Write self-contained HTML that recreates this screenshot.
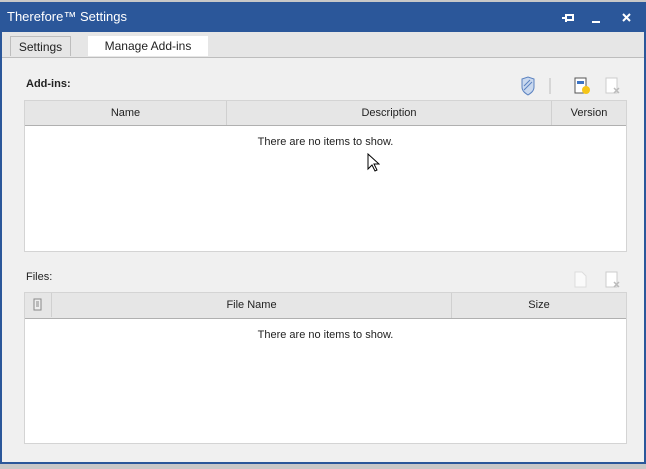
<!DOCTYPE html><html><head><style>
body{margin:0;width:646px;height:469px;background:#c8c8c8;font-family:"Liberation Sans",sans-serif;font-size:11px;color:#222;position:relative;overflow:hidden}
.a{position:absolute}
.win{left:0;top:2px;width:642px;height:460px;border:2px solid #2b579a;border-top:0;background:#f0f0f0}
.title{left:0;top:2px;width:646px;height:30px;background:#2b579a;color:#fff;font-size:13px}
.tbl{background:#fff;border:1px solid #d4d4d4}
.hdr{position:absolute;left:0;top:0;right:0;height:24px;background:#e6e6e6;border-bottom:1px solid #b0b0b0}
.hc{position:absolute;top:0;height:24px;line-height:24px;text-align:center;border-right:1px solid #d0d0d0}
.empty{position:absolute;left:0;right:0;text-align:center}
</style></head><body>
<div class="a win"></div>
<div class="a title"><span class="a" style="left:7px;top:7px">Therefore™ Settings</span>
<svg class="a" style="left:560px;top:9px" width="80" height="14"><g stroke="#fff" stroke-width="2" fill="none"><path d="M2 7h4M6 3v8M6 4h7v5H6"/><path d="M32 11h8"/><path d="M63 3l7 7M70 3l-7 7"/></g></svg></div>
<div class="a" style="left:2px;top:32px;width:642px;height:25px;background:#e6e6e6;border-bottom:1px solid #bdbdbd"></div>
<div class="a" style="left:10px;top:36px;width:59px;height:19px;border:1px solid #bdbdbd;border-bottom:0;background:#e6e6e6;text-align:center;line-height:20px;font-size:12px">Settings</div>
<div class="a" style="left:88px;top:36px;width:120px;height:20px;background:#fff;text-align:center;line-height:20px;font-size:12px">Manage Add-ins</div>
<div class="a" style="left:26px;top:78px;font-weight:bold">Add-ins:</div>
<svg class="a" style="left:518px;top:76px" width="110" height="20"><path d="M4 3l6-2 6 2v8c0 4-3 6-6 8-3-2-6-4-6-8z" fill="#c9d8ee" stroke="#5b82c0"/><path d="M6 14l8-8M6 10l6-6" stroke="#5b82c0"/><path d="M32 2v16" stroke="#bbb"/><rect x="57" y="2" width="11" height="15" fill="#fff" stroke="#555"/><rect x="59" y="5" width="7" height="3" fill="#3b73c4"/><circle cx="68" cy="14" r="4" fill="#f5c518"/><rect x="88" y="2" width="11" height="15" fill="#fff" stroke="#ccc"/><path d="M96 12l5 5M101 12l-5 5" stroke="#bbb" stroke-width="1.5"/></svg>
<div class="a tbl" style="left:24px;top:100px;width:601px;height:150px"><div class="hdr">
<div class="hc" style="left:0;width:201px">Name</div><div class="hc" style="left:202px;width:324px">Description</div><div class="hc" style="left:527px;width:74px;border:0">Version</div></div>
<div class="empty" style="top:35px">There are no items to show.</div></div>
<svg class="a" style="left:366px;top:153px" width="14" height="20"><path d="M2 1v15l4-4 3 6 2-1-3-6h5z" fill="#fff" stroke="#000"/></svg>
<div class="a" style="left:26px;top:271px">Files:</div>
<svg class="a" style="left:572px;top:270px" width="56" height="20"><path d="M3 2h7l4 4v11H3z" fill="#fafafa" stroke="#ddd"/><rect x="34" y="2" width="11" height="15" fill="#fff" stroke="#ccc"/><path d="M42 12l5 5M47 12l-5 5" stroke="#bbb" stroke-width="1.5"/></svg>
<div class="a tbl" style="left:24px;top:292px;width:601px;height:150px"><div class="hdr" style="height:25px">
<div class="hc" style="left:0;width:26px"><svg width="10" height="14" style="margin-top:5px"><rect x="1" y="1" width="7" height="11" fill="#eee" stroke="#888"/><path d="M3 4h3M3 6h3M3 8h3" stroke="#888"/></svg></div><div class="hc" style="left:27px;width:399px;height:25px;line-height:25px">File Name</div><div class="hc" style="left:427px;width:174px;border:0;height:25px;line-height:25px">Size</div></div>
<div class="empty" style="top:36px">There are no items to show.</div></div>
</body></html>
